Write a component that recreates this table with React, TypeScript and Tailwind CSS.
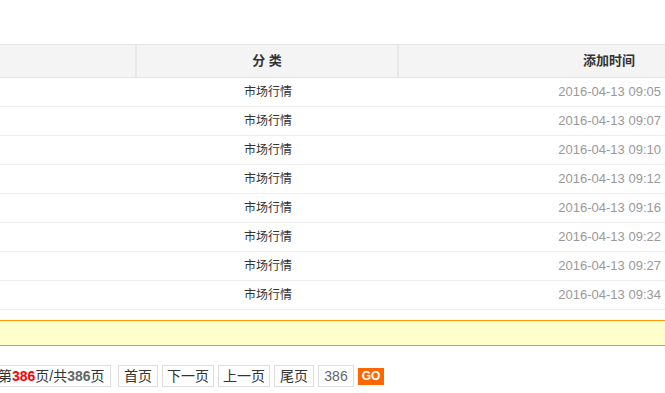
const rows = ["09:05", "09:07", "09:10", "09:12", "09:16", "09:22", "09:27", "09:34"];

const font = "font-['Liberation_Sans','Noto_Sans_CJK_SC',sans-serif]";

export default function App() {
  return (
    <div className={`w-[665px] h-[393px] bg-white overflow-hidden ${font}`}>
      <div className="h-[44px]" />

      {/* table header */}
      <div className="flex h-[34px] bg-[#f4f4f4] border-y border-[#e5e5e5] text-[13px] font-bold text-[#333]">
        <div className="w-[137px] border-r-2 border-[#e8e8e8]" />
        <div className="w-[262px] border-r-2 border-[#e8e8e8] flex items-center justify-center">分 类</div>
        <div className="flex-1 flex items-center justify-end pr-[30px]">添加时间</div>
      </div>

      {/* rows */}
      {rows.map((t) => (
        <div key={t} className="flex h-[29px] border-b border-[#eeeeee] items-center">
          <div className="w-[137px]" />
          <div className="w-[262px] text-center text-[12px] text-[#333]">市场行情</div>
          <div className="flex-1 text-right pr-[4px] text-[13px] text-[#999]">2016-04-13 {t}</div>
        </div>
      ))}

      {/* notice bar */}
      <div className="mt-[10px] h-[26px] bg-[#ffffcc] border-y border-[#ff9900]" />

      {/* pagination */}
      <div className="mt-[19px] flex items-center text-[14px] text-[#333]">
        <div className="ml-[-5px] h-[22px] w-[116px] pl-[2px] flex items-center whitespace-nowrap border border-[#dddddd]">
          第<b className="text-[#ff0000]">386</b>页/共<b className="text-[#666]">386</b>页
        </div>
        <div className="ml-[7px] h-[22px] w-[40px] flex items-center justify-center border border-[#dddddd]">首页</div>
        <div className="ml-[4px] h-[22px] w-[52px] flex items-center justify-center border border-[#dddddd]">下一页</div>
        <div className="ml-[4px] h-[22px] w-[52px] flex items-center justify-center border border-[#dddddd]">上一页</div>
        <div className="ml-[4px] h-[22px] w-[40px] flex items-center justify-center border border-[#dddddd]">尾页</div>
        <div className="ml-[4px] h-[22px] w-[36px] flex items-center justify-center border border-[#dddddd] text-[#666]">386</div>
        <div className="ml-[4px] h-[17px] w-[26px] flex items-center justify-center bg-[#ff6600] text-white font-bold text-[12px]">GO</div>
      </div>
    </div>
  );
}
